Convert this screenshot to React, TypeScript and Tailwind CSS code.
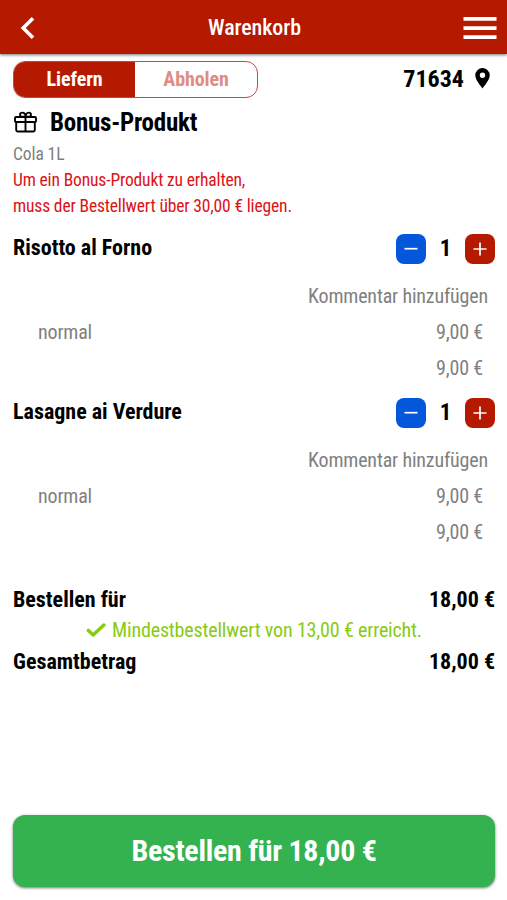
import React from 'react';

function Stepper() {
  return (
    <div className="flex items-center">
      <button className="flex h-[30px] w-[30px] items-center justify-center rounded-[8px] bg-[#0457da]">
        <svg width="14" height="14" viewBox="0 0 14 14" stroke="white" strokeWidth="1.7"><path d="M.5 6.7h13" /></svg>
      </button>
      <span className="w-[39px] pt-px text-center text-[23px] font-bold">1</span>
      <button className="flex h-[30px] w-[30px] items-center justify-center rounded-[8px] bg-[#b51a00]">
        <svg width="14" height="14" viewBox="0 0 14 14" stroke="white" strokeWidth="1.7"><path d="M.5 7h13M7 .5v13" /></svg>
      </button>
    </div>
  );
}

function Item({ name }: { name: string }) {
  return (
    <section className="h-[164px] text-[20px] tracking-[-0.17px] text-[#808080]">
      <div className="flex h-[30px] items-center justify-between text-black">
        <h2 className="-mt-[3px] text-[22px] font-bold tracking-normal">{name}</h2>
        <Stepper />
      </div>
      <div className="mt-[14px] flex h-9 items-center justify-end pr-[7px]">Kommentar hinzufügen</div>
      <div className="flex h-9 items-center justify-between pl-[25px] pr-3"><span>normal</span><span>9,00 €</span></div>
      <div className="flex h-9 items-center justify-end pr-3">9,00 €</div>
    </section>
  );
}

export default function App() {
  return (
    <div className="flex h-[900px] w-[507px] flex-col overflow-hidden whitespace-nowrap bg-white text-black [font-family:'Roboto_Condensed',Roboto,sans-serif] [font-stretch:75%]">
      <header className="flex h-[54px] shrink-0 items-center justify-between bg-[#b51a00] pl-5 pr-[10px] text-white shadow-[0_1px_3px_rgba(0,0,0,0.55)]">
        <svg className="mt-[2px]" width="26" height="24" viewBox="0 0 26 24" fill="none" stroke="white" strokeWidth="3.6"><path d="M13 2.2 3.2 12 13 21.8" /></svg>
        <h1 className="mt-[1px] text-[22px] font-medium tracking-[-0.1px]">Warenkorb</h1>
        <svg className="mt-[2px]" width="34" height="24" viewBox="0 0 34 24" fill="white"><path d="M.5 1h33v3.7H.5zM.5 10.2h33v3.7H.5zM.5 19.3h33V23H.5z" /></svg>
      </header>
      <main className="flex flex-1 flex-col pl-[13px] pr-3">
        <div className="mt-[7px] flex h-[37px] items-center justify-between">
          <div className="flex h-full w-[245px] overflow-hidden rounded-[12px] border border-[#c34a3c] text-[20px] font-bold tracking-[-0.1px]">
            <div className="flex w-[121px] items-center justify-center bg-[#b51a00] pb-px text-white">Liefern</div>
            <div className="flex flex-1 items-center justify-center pb-px text-[#de8d82]">Abholen</div>
          </div>
          <div className="flex items-center pb-[2px] pr-[5px] text-[24px] font-bold">
            71634
            <svg className="ml-[11px]" width="15" height="21" viewBox="0 0 15 21"><path fillRule="evenodd" d="M7.5 0A7.2 7.2 0 0 0 .3 7.3C.3 11 3 14.500 7.500 20.500 12 14.500 14.700 11 14.700 7.300A7.200 7.200 0 0 0 7.500 0Zm0 4.600a2.700 2.700 0 1 1 0 5.400 2.700 2.700 0 0 1 0-5.400Z" /></svg>
          </div>
        </div>
        <div className="mt-[6px] flex h-9 items-center">
          <svg width="24" height="22" viewBox="0 0 24 22" fill="none" stroke="black" strokeWidth="1.9" strokeLinejoin="round"><rect x="2" y="6" width="21" height="5" rx="1" /><path d="M3.200 11v8q0 1.500 1.500 1.500h15.600q1.500 0 1.500-1.500v-8M12.500 6v14.500M12.500 5.800H9.800C6 5.800 6.400 1.600 9.200 1.600 11.200 1.600 12.500 3.400 12.500 5.800ZM12.500 5.800h2.700C19 5.800 18.600 1.600 15.800 1.600 13.800 1.600 12.500 3.400 12.500 5.800Z" /></svg>
          <h2 className="ml-[13px] mt-[2px] text-[25px] font-bold tracking-[-0.24px]">Bonus-Produkt</h2>
        </div>
        <p className="mt-px h-[26px] text-[17.500px] leading-[26px] tracking-[-0.1px] text-[#808080]">Cola 1L</p>
        <p className="mb-[-1px] mt-px text-[17.500px] font-[450] leading-[25.500px] tracking-[-0.15px] text-[#dc1216]">Um ein Bonus-Produkt zu erhalten,<br />muss der Bestellwert über 30,00 € liegen.</p>
        <div className="mt-4 h-[328px]">
          <Item name="Risotto al Forno" />
          <Item name="Lasagne ai Verdure" />
        </div>
        <div className="mt-[21px] flex h-8 items-center justify-between text-[22px] font-bold"><span>Bestellen für</span><span>18,00 €</span></div>
        <div className="flex h-[30px] items-center justify-center text-[20px] tracking-[-0.17px] text-[#88cb12]">
          <svg className="mr-[6px]" width="20" height="16" viewBox="0 0 20 16" fill="none" stroke="currentColor" strokeWidth="3.500" strokeLinecap="round" strokeLinejoin="round"><path d="M2.400 8.400 7.200 13 17.800 3" /></svg>
          Mindestbestellwert von 13,00 € erreicht.
        </div>
        <div className="flex h-8 items-center justify-between text-[22px] font-bold"><span>Gesamtbetrag</span><span>18,00 €</span></div>
        <button className="mb-[13px] mt-auto flex h-[72px] shrink-0 items-center justify-center rounded-[12px] bg-[#34b250] pb-px text-[30px] font-bold tracking-[-0.28px] text-white shadow-[0_1px_3px_rgba(0,0,0,0.55)]">Bestellen für 18,00 €</button>
      </main>
    </div>
  );
}
